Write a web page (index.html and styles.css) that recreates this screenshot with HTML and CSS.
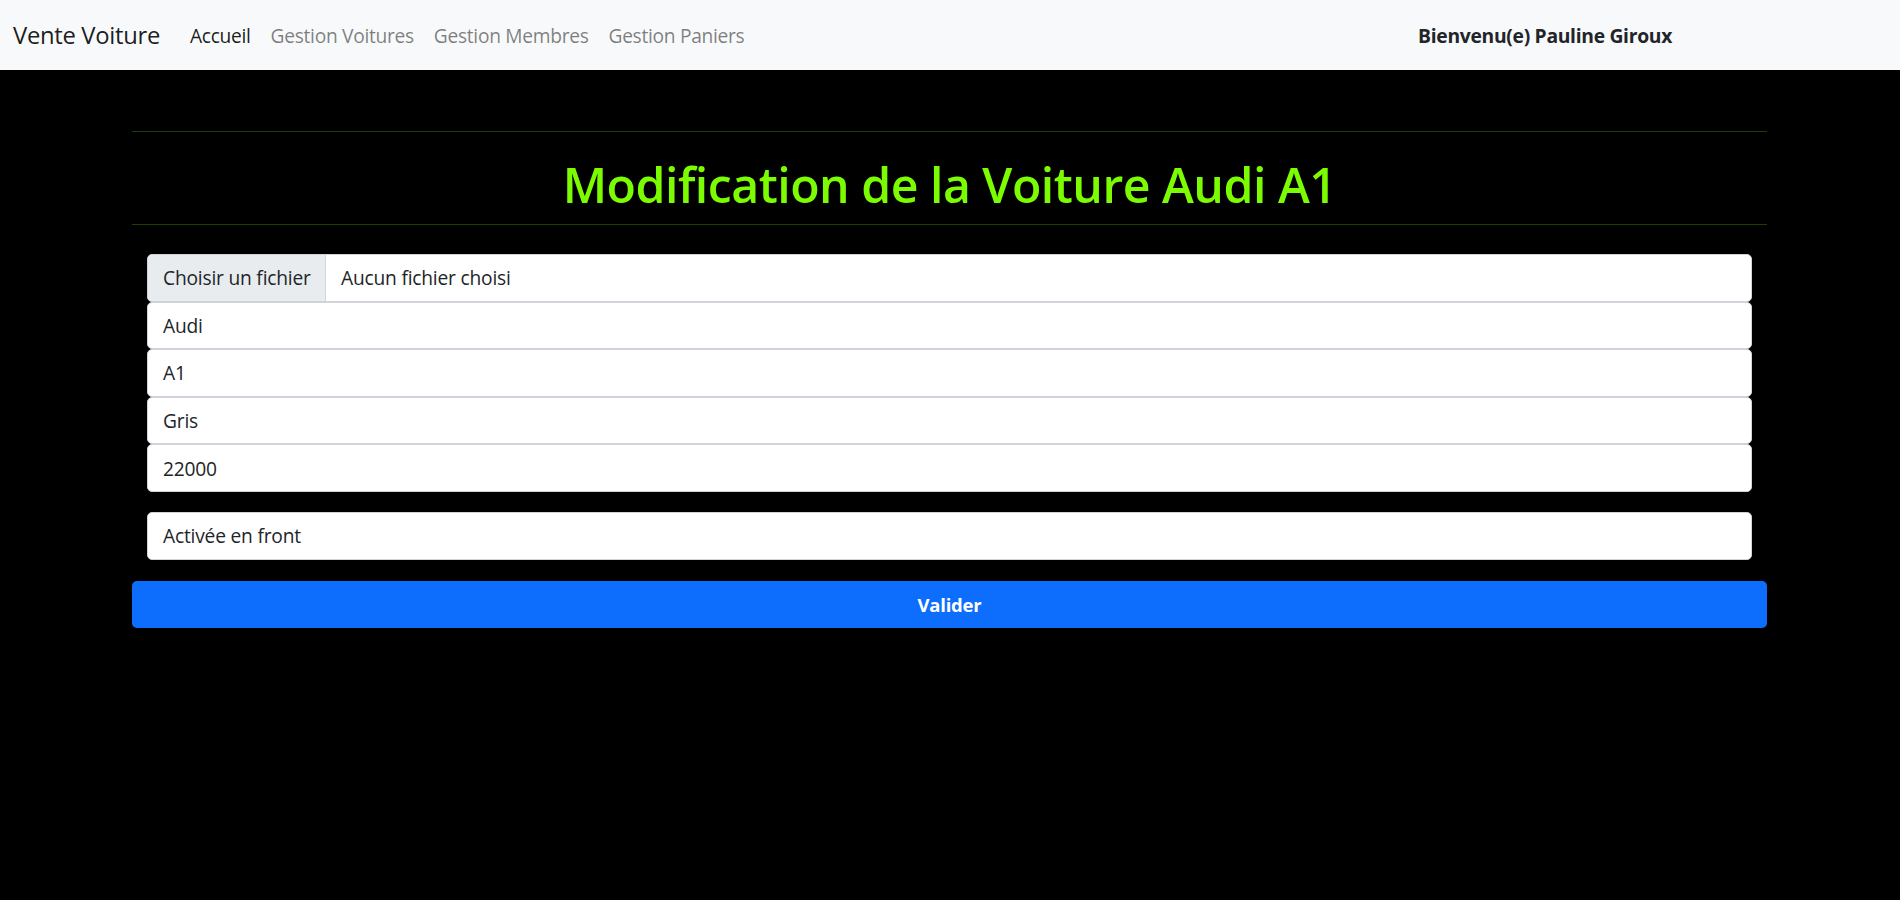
FILE: index.html
```html
<!DOCTYPE html>
<html lang="fr">
<head>
<meta charset="utf-8">
<title>Modification de la Voiture Audi A1</title>
<link rel="stylesheet" href="styles.css">
</head>
<body>
<nav class="navbar">
  <a class="brand" href="#">Vente Voiture</a>
  <ul class="nav-links">
    <li><a class="nav-link active" href="#">Accueil</a></li>
    <li><a class="nav-link" href="#">Gestion Voitures</a></li>
    <li><a class="nav-link" href="#">Gestion Membres</a></li>
    <li><a class="nav-link" href="#">Gestion Paniers</a></li>
  </ul>
  <span class="welcome">Bienvenu(e) Pauline Giroux</span>
</nav>
<main class="container">
  <hr class="rule">
  <h1 class="title">Modification de la Voiture Audi A1</h1>
  <hr class="rule">
  <form class="car-form">
    <div class="fields">
      <div class="field file-field">
        <span class="file-btn">Choisir un fichier</span>
        <span class="file-name">Aucun fichier choisi</span>
      </div>
      <div class="field">Audi</div>
      <div class="field">A1</div>
      <div class="field">Gris</div>
      <div class="field">22000</div>
    </div>
    <div class="fields single">
      <div class="field">Activée en front</div>
    </div>
    <button type="button" class="submit">Valider</button>
  </form>
</main>
</body>
</html>
```
FILE: styles.css
```css
* { box-sizing: border-box; }
html, body { margin: 0; padding: 0; }
body {
  background: #000;
  font-family: "Open Sans", "Noto Sans", "Liberation Sans", sans-serif;
  color: #212529;
  height: 900px;
  overflow: hidden;
}
.navbar {
  height: 70px;
  background: #f8f9fa;
  display: flex;
  align-items: center;
  padding: 0 0 0 13px;
}
.brand {
  font-size: 23.8px;
  color: rgba(0,0,0,0.9);
  text-decoration: none;
  margin-right: 20px;
  letter-spacing: -0.3px;
}
.nav-links {
  list-style: none;
  display: flex;
  margin: 0;
  padding: 0;
}
.nav-link {
  display: block;
  padding: 0 10px;
  font-size: 19.2px;
  color: rgba(0,0,0,0.5);
  text-decoration: none;
  letter-spacing: -0.3px;
}
.nav-link.active { color: rgba(0,0,0,0.9); }
.welcome {
  margin-left: auto;
  margin-right: 228px;
  font-weight: 700;
  font-size: 19.3px;
  color: #212529;
  letter-spacing: -0.3px;
}
.container {
  padding: 61px 133px 0 132px;
}
.rule {
  border: 0;
  border-top: 1px solid rgba(124,252,0,0.25);
  margin: 0;
}
.title {
  margin: 0;
  height: 92px;
  padding-top: 12px;
  display: flex;
  align-items: center;
  justify-content: center;
  color: #7cfc00;
  font-size: 48.2px;
  font-weight: 600;
  letter-spacing: -0.5px;
}
.car-form {
  padding-top: 29px;
}
.fields {
  padding: 0 15px;
}
.fields.single { margin-top: 20px; }
.field {
  height: 47.6px;
  background: #fff;
  border: 1px solid #ced4da;
  border-radius: 5px;
  display: flex;
  align-items: center;
  padding: 0 15px;
  font-size: 19.2px;
  color: #212529;
  letter-spacing: -0.2px;
  white-space: nowrap;
}
.file-field { padding: 0; overflow: hidden; }
.file-btn {
  flex: 0 0 178px;
  height: 100%;
  display: flex;
  align-items: center;
  padding: 0 12px 0 15px;
  background: #e9ecef;
  border-right: 1px solid #ced4da;
  white-space: nowrap;
}
.file-name { padding-left: 15px; }
.submit {
  display: block;
  width: 100%;
  height: 47.6px;
  margin-top: 21px;
  background: #0d6efd;
  color: #fff;
  border: 0;
  border-radius: 5px;
  font-family: inherit;
  font-size: 18.5px;
  font-weight: 700;
  letter-spacing: -0.2px;
}
```
